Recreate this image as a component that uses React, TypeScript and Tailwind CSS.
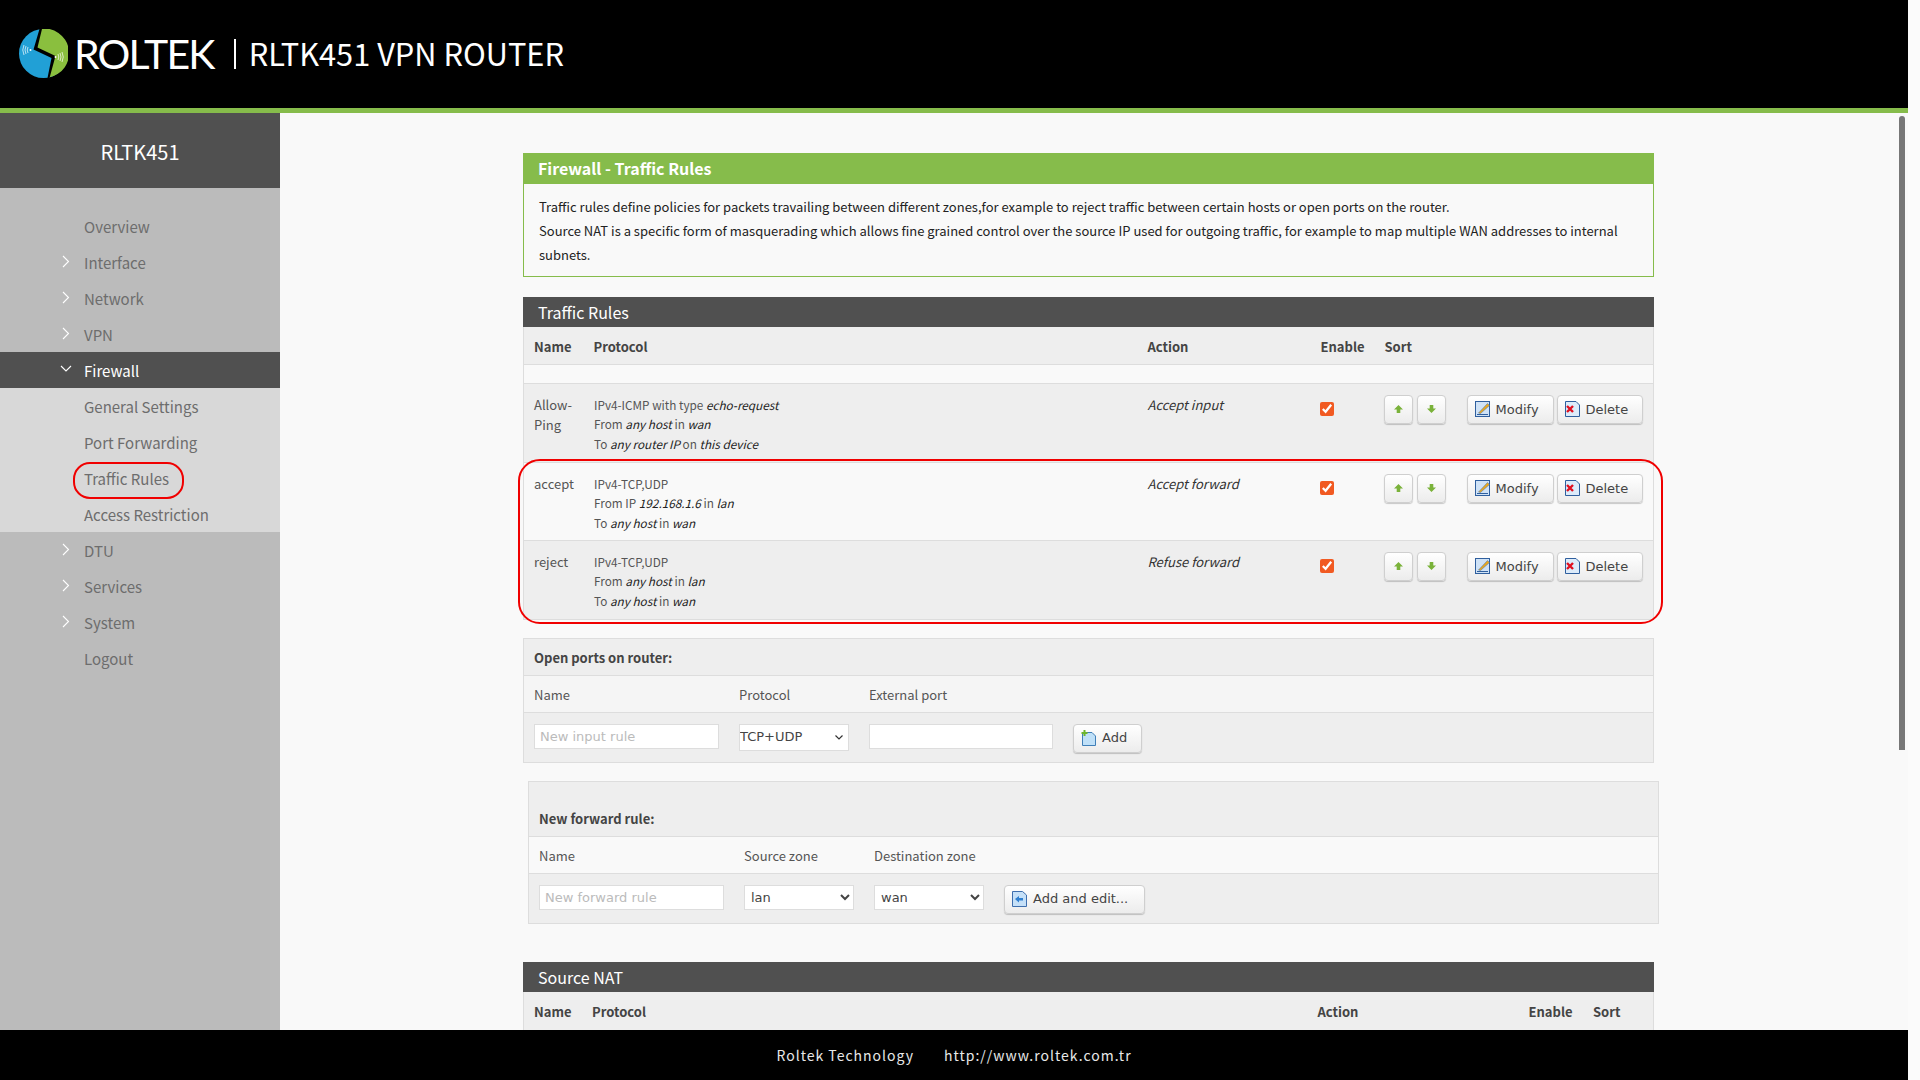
import React from "react";

const sans = "font-['Noto_Sans_CJK_SC','Noto_Sans',sans-serif]";
const deja = "font-['DejaVu_Sans',sans-serif]";

function Logo() {
  return (
    <svg width="49" height="49" viewBox="0 0 49 49" className="shrink-0">
      <circle cx="24.5" cy="24.5" r="24.5" fill="#21a0d6" />
      <path d="M21 0 A24.5 24.5 0 0 1 30 48.4 L34.5 27.5 L16.5 19.5 Z" fill="#8abf3e" />
      <path d="M20.5 0 L23 0 L18.5 18.5 L36.5 27 L30.5 49 L28.5 49 L32.5 29 L14.5 20.5 Z" fill="#000" />
      <g fill="none" stroke="#dff2fb" strokeWidth="0.8">
        <path d="M9 18 Q7.5 21 9 24" />
        <path d="M7 17 Q5 21 7 25" />
        <path d="M5 16 Q2.5 21 5 26" />
      </g>
      <circle cx="11.5" cy="21" r="1" fill="#fff" />
      <g fill="none" stroke="#f3f9e6" strokeWidth="0.8">
        <path d="M39 25 Q40.5 28 39 31" />
        <path d="M41 24 Q43 28 41 32" />
        <path d="M43 23 Q45.5 28 43 33" />
      </g>
      <circle cx="36.5" cy="28" r="1" fill="#fff" />
    </svg>
  );
}

function Chevron({ open }: { open?: boolean }) {
  return open ? (
    <svg width="12" height="8" viewBox="0 0 12 8" className="absolute left-[60px] top-[13px]">
      <path d="M1 1 L6 6 L11 1" fill="none" stroke="#fff" strokeWidth="1.1" />
    </svg>
  ) : (
    <svg width="8" height="13" viewBox="0 0 8 13" className="absolute left-[62px] top-[11px]">
      <path d="M1 1 L6.5 6.5 L1 12" fill="none" stroke="#fff" strokeWidth="1.1" />
    </svg>
  );
}

function MenuItem({ label, chevron, active, open }: { label: string; chevron?: boolean; active?: boolean; open?: boolean }) {
  return (
    <div className={`relative h-[36px] pl-[84px] text-[15px] leading-[38px] ${active ? "bg-[#505050] text-white" : "text-[#6d6d6d]"}`}>
      {chevron && <Chevron open={open} />}
      {label}
    </div>
  );
}

function Sidebar() {
  return (
    <aside className="relative w-[280px] shrink-0 bg-[#bbbbbb]">
      <div className="flex h-[75px] items-center justify-center bg-[#505050] pt-[2px] text-[20px] text-white">RLTK451</div>
      <div className="pt-[20px]">
        <MenuItem label="Overview" />
        <MenuItem label="Interface" chevron />
        <MenuItem label="Network" chevron />
        <MenuItem label="VPN" chevron />
        <MenuItem label="Firewall" chevron active open />
        <div className="bg-[#d8d8d8]">
          <MenuItem label="General Settings" />
          <MenuItem label="Port Forwarding" />
          <MenuItem label="Traffic Rules" />
          <MenuItem label="Access Restriction" />
        </div>
        <MenuItem label="DTU" chevron />
        <MenuItem label="Services" chevron />
        <MenuItem label="System" chevron />
        <MenuItem label="Logout" />
      </div>
      <div className="absolute left-[73px] top-[349px] h-[37px] w-[111px] rounded-[17px] border-2 border-[#f00000]" />
    </aside>
  );
}

function ArrowIcon({ down }: { down?: boolean }) {
  return (
    <svg width="9" height="8" viewBox="0 0 9 8">
      <path
        d={down ? "M2.7 0 H6.3 V3.5 H9 L4.5 8 L0 3.5 H2.7 Z" : "M4.5 0 L9 4.5 H6.3 V8 H2.7 V4.5 H0 Z"}
        fill="#7ab23a"
      />
    </svg>
  );
}

function ModifyIcon() {
  return (
    <svg width="16" height="16" viewBox="0 0 16 16" className="shrink-0">
      <rect x="0.5" y="0.5" width="14" height="15" fill="#cfe2f6" stroke="#2f5f9e" />
      <path d="M2 13.5 H13" stroke="#2f5f9e" strokeWidth="1" />
      <path d="M3.5 12 L12.5 2.5 L14.5 4.5 L5.5 12.5 Z" fill="#e8a820" stroke="#3f6fae" strokeWidth="0.5" />
    </svg>
  );
}

function DeleteIcon() {
  return (
    <svg width="16" height="16" viewBox="0 0 16 16" className="shrink-0">
      <path d="M0.5 0.5 H11 L14.5 4 V15.5 H0.5 Z" fill="#dcebfa" stroke="#2f5f9e" />
      <path d="M2 5 L8 11 M8 5 L2 11" stroke="#e01020" strokeWidth="2.4" />
    </svg>
  );
}

function AddIcon() {
  return (
    <svg width="16" height="16" viewBox="0 0 16 16" className="shrink-0">
      <path d="M1.5 2.5 H11 L14.5 6 V15.5 H1.5 Z" fill="#bfe0f8" stroke="#3f7fb8" />
      <path d="M3.5 0 V6 M0.5 3 H6.5" stroke="#6db52d" strokeWidth="2" />
    </svg>
  );
}

function EditAddIcon() {
  return (
    <svg width="15" height="16" viewBox="0 0 15 16" className="shrink-0">
      <path d="M0.5 0.5 H10.5 L14.5 4 V15.5 H0.5 Z" fill="#c5e0f8" stroke="#3f6fae" />
      <path d="M3 8 L7 5 V7 H11 V9.5 H7 V11.5 Z" fill="#2f7fd0" />
    </svg>
  );
}

function Btn({ className, children }: { className: string; children: React.ReactNode }) {
  return (
    <button
      type="button"
      className={`flex h-[29px] items-center rounded-[4px] border border-[#cfcfcf] bg-gradient-to-b from-[#ffffff] to-[#ececec] text-[13px] text-[#444444] shadow-[0_1px_1px_rgba(0,0,0,0.2)] ${deja} ${className}`}
    >
      {children}
    </button>
  );
}

function Rule({ name, lines, action, alt, short }: { name: string; lines: React.ReactNode[]; action: string; alt?: boolean; short?: boolean }) {
  return (
    <tr className={`${short ? "h-[78px]" : "h-[79px]"} border-t border-[#dddddd] align-top ${alt ? "bg-[#eeeeee]" : "bg-[#f9f9f9]"}`}>
      <td className="pl-[10px] pt-[11px] text-[13px] leading-[20px] text-[#555555]">{name}</td>
      <td className="pl-[10.5px] pt-[11px] text-[11.75px] leading-[19.7px] text-[#555555]">
        {lines.map((l, i) => (
          <div key={i}>{l}</div>
        ))}
      </td>
      <td className="pl-[11px] pt-[11px] text-[13px] leading-[20px] text-[#333333] italic">{action}</td>
      <td className="pl-[9px] pt-[18px]">
        <input type="checkbox" defaultChecked className="block h-[14px] w-[14px] accent-[#f15a22]" />
      </td>
      <td className="pl-[10px] pt-[11px]">
        <div className="flex">
          <Btn className="w-[29px] justify-center"><ArrowIcon /></Btn>
          <Btn className="ml-[4px] w-[29px] justify-center"><ArrowIcon down /></Btn>
          <Btn className="ml-[21px] w-[87px] gap-[5px] pl-[7px]"><ModifyIcon /><span className="pt-[1px]">Modify</span></Btn>
          <Btn className="ml-[3px] w-[86px] gap-[5px] pl-[7px]"><DeleteIcon /><span className="pt-[1px]">Delete</span></Btn>
        </div>
      </td>
    </tr>
  );
}

const I = ({ children }: { children: React.ReactNode }) => <em className="text-[#222222]">{children}</em>;

function SectionBar({ title }: { title: string }) {
  return <div className="flex h-[30px] items-center bg-[#505050] pl-[15px] text-[16px] text-white">{title}</div>;
}

function Th({ children, tight }: { children?: React.ReactNode; tight?: boolean }) {
  return <th className={`${tight ? "pl-[10px]" : "pl-[11px]"} pt-[2px] text-left text-[13px] font-bold text-[#444444]`}>{children}</th>;
}

function TrafficRules() {
  return (
    <section className="relative mt-[20px]">
      <SectionBar title="Traffic Rules" />
      <table className="w-full table-fixed border-collapse border-x border-b border-[#dddddd]">
        <colgroup>
          <col className="w-[60px]" />
          <col className="w-[553px]" />
          <col className="w-[174px]" />
          <col className="w-[63px]" />
          <col />
        </colgroup>
        <thead>
          <tr className="h-[37px] bg-[#eeeeee]">
            <Th tight>Name</Th>
            <Th tight>Protocol</Th>
            <Th>Action</Th>
            <Th tight>Enable</Th>
            <Th>Sort</Th>
          </tr>
        </thead>
        <tbody>
          <tr className="h-[19px] border-t border-[#dddddd] bg-[#f9f9f9]">
            <td colSpan={5} />
          </tr>
          <Rule
            alt
            name="Allow-Ping"
            action="Accept input"
            lines={[
              <>IPv4-ICMP with type <I>echo-request</I></>,
              <>From <I>any host</I> in <I>wan</I></>,
              <>To <I>any router IP</I> on <I>this device</I></>,
            ]}
          />
          <Rule
            short
            name="accept"
            action="Accept forward"
            lines={[
              <>IPv4-TCP,UDP</>,
              <>From IP <I>192.168.1.6</I> in <I>lan</I></>,
              <>To <I>any host</I> in <I>wan</I></>,
            ]}
          />
          <Rule
            alt
            name="reject"
            action="Refuse forward"
            lines={[
              <>IPv4-TCP,UDP</>,
              <>From <I>any host</I> in <I>lan</I></>,
              <>To <I>any host</I> in <I>wan</I></>,
            ]}
          />
        </tbody>
      </table>
      <div className="absolute left-[-5px] top-[162px] h-[165px] w-[1145px] rounded-[22px] border-2 border-[#f00000]" />
    </section>
  );
}

const fieldCls = `h-[25px] border border-[#dddddd] bg-white text-[13px] ${deja}`;

function OpenPorts() {
  return (
    <section className="mt-[18px] border border-[#dddddd] bg-[#eeeeee] text-[13px]">
      <div className="flex h-[37px] items-center border-b border-[#dddddd] pl-[10px] pt-[2px] font-bold text-[#444444]">Open ports on router:</div>
      <div className="flex h-[37px] items-center border-b border-[#dddddd] bg-[#f5f5f5] pl-[10px] pt-[2px] text-[#555555]">
        <span className="w-[205px]">Name</span>
        <span className="w-[130px]">Protocol</span>
        <span>External port</span>
      </div>
      <div className="flex h-[49px] items-start pl-[10px] pt-[11px]">
        <input placeholder="New input rule" className={`${fieldCls} w-[185px] px-[5px] placeholder:text-[#bbbbbb]`} />
        <div className="relative ml-[20px] h-[27px] w-[110px]">
          <select defaultValue="TCP+UDP" className={`${fieldCls} h-[27px] w-[110px] appearance-none pl-0 text-[#444444]`}>
            <option>TCP+UDP</option>
          </select>
          <svg width="8" height="5" viewBox="0 0 8 5" className="absolute right-[6px] top-[11px]">
            <path d="M0.5 0.5 L4 4 L7.5 0.5" fill="none" stroke="#333333" strokeWidth="1.2" />
          </svg>
        </div>
        <input className={`${fieldCls} ml-[20px] w-[184px]`} />
        <Btn className="ml-[20px] w-[69px] gap-[5px] pl-[7px]"><AddIcon />Add</Btn>
      </div>
    </section>
  );
}

function ForwardRule() {
  return (
    <section className="ml-[5px] mr-[-5px] mt-[18px] border border-[#dddddd] bg-[#eeeeee] text-[13px]">
      <div className="flex h-[55px] items-end border-b border-[#dddddd] pb-[7px] pl-[10px] font-bold text-[#444444]">New forward rule:</div>
      <div className="flex h-[37px] items-center border-b border-[#dddddd] bg-[#f9f9f9] pl-[10px] pt-[3px] text-[#555555]">
        <span className="w-[205px]">Name</span>
        <span className="w-[130px]">Source zone</span>
        <span>Destination zone</span>
      </div>
      <div className="flex h-[49px] items-start pl-[10px] pt-[11px]">
        <input placeholder="New forward rule" className={`${fieldCls} w-[185px] px-[5px] placeholder:text-[#bbbbbb]`} />
        <select defaultValue="lan" className={`${fieldCls} ml-[20px] w-[110px] pl-[2px] text-[#444444]`}>
          <option>lan</option>
        </select>
        <select defaultValue="wan" className={`${fieldCls} ml-[20px] w-[110px] pl-[2px] text-[#444444]`}>
          <option>wan</option>
        </select>
        <Btn className="ml-[20px] w-[141px] gap-[6px] pl-[7px]"><EditAddIcon />Add and edit...</Btn>
      </div>
    </section>
  );
}

function SourceNat() {
  return (
    <section className="mt-[38px]">
      <SectionBar title="Source NAT" />
      <div className="flex h-[38px] items-center border-x border-[#dddddd] bg-[#eeeeee] pt-[2px] text-[13px] font-bold text-[#444444]">
        <span className="ml-[10px] w-[58px]">Name</span>
        <span className="w-[725.5px]">Protocol</span>
        <span className="w-[211px]">Action</span>
        <span className="w-[64.5px]">Enable</span>
        <span>Sort</span>
      </div>
    </section>
  );
}

export default function App() {
  return (
    <div className={`flex h-screen w-full overflow-hidden bg-[#fbfbfb] ${sans}`}>
      <div className="flex h-full w-[1908px] flex-col">
        <header className="flex h-[113px] shrink-0 items-start border-b-[5px] border-[#86bc4b] bg-black pl-[19px] pt-[29px] text-white">
          <Logo />
          <span className="ml-[6px] mt-[3px] font-['Lato',sans-serif] text-[41px] leading-[43px] tracking-[-1.8px]">ROLTEK</span>
          <span className="ml-[20px] mt-[10px] h-[30px] w-[2px] bg-white" />
          <span className="ml-[13px] mt-[5px] text-[30.75px] leading-[38px]">RLTK451 VPN ROUTER</span>
        </header>
        <div className="flex min-h-0 flex-1">
          <Sidebar />
          <main className="relative min-w-0 flex-1 overflow-hidden bg-[#f9f9f9]">
            <div className="ml-[243px] w-[1131px] pt-[40px]">
              <section>
                <div className="flex h-[31px] items-center bg-[#86bc4b] pb-[2px] pl-[15px] text-[16px] font-bold text-white">Firewall - Traffic Rules</div>
                <div className="border border-t-0 border-[#86bc4b] px-[15px] pb-[9px] pt-[11px] text-[13px] leading-[24px] text-[#222222]">
                  Traffic rules define policies for packets travailing between different zones,for example to reject traffic between certain hosts or open ports on the router.
                  <br />
                  Source NAT is a specific form of masquerading which allows fine grained control over the source IP used for outgoing traffic, for example to map multiple WAN addresses to internal subnets.
                </div>
              </section>
              <TrafficRules />
              <OpenPorts />
              <ForwardRule />
              <SourceNat />
            </div>
            <div className="absolute left-[1619px] top-[3px] h-[634px] w-[6px] rounded-t-[3px] bg-[#777777]" />
          </main>
        </div>
        <footer className="flex h-[50px] shrink-0 items-center justify-center gap-[30px] bg-black text-[14px] tracking-[1px] text-[#e8e8e8]">
          <span>Roltek Technology</span>
          <span>http://www.roltek.com.tr</span>
        </footer>
      </div>
    </div>
  );
}
